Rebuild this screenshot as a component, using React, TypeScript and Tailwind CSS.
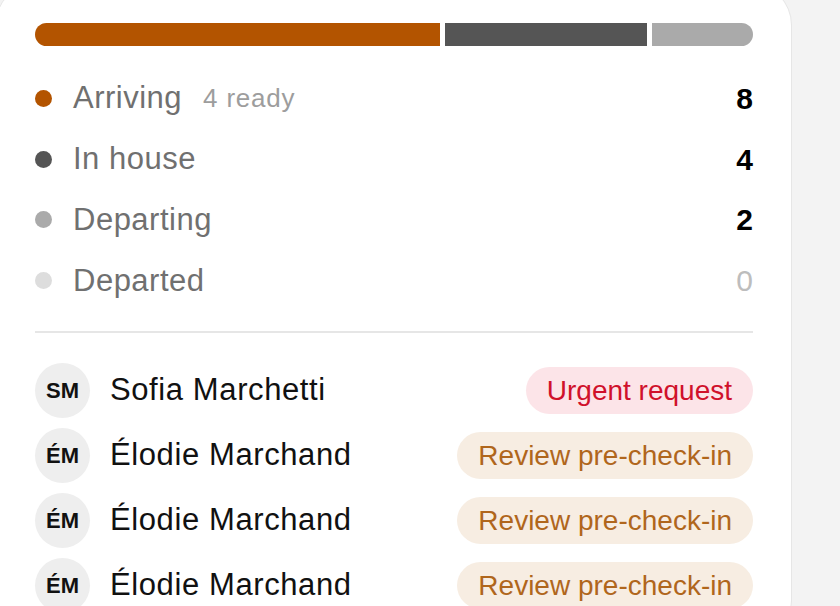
const stats = [
  { label: 'Arriving', note: '4 ready', count: 8, dot: 'bg-[#b35400]', num: 'font-bold text-black' },
  { label: 'In house', note: '', count: 4, dot: 'bg-[#555555]', num: 'font-bold text-black' },
  { label: 'Departing', note: '', count: 2, dot: 'bg-[#aaaaaa]', num: 'font-bold text-black' },
  { label: 'Departed', note: '', count: 0, dot: 'bg-[#dddddd]', num: 'text-[#bdbdbd]' },
];

const guests = [
  { initials: 'SM', name: 'Sofia Marchetti', action: 'Urgent request', urgent: true },
  { initials: 'ÉM', name: 'Élodie Marchand', action: 'Review pre-check-in', urgent: false },
  { initials: 'ÉM', name: 'Élodie Marchand', action: 'Review pre-check-in', urgent: false },
  { initials: 'ÉM', name: 'Élodie Marchand', action: 'Review pre-check-in', urgent: false },
];

export default function App() {
  return (
    <div
      className="w-[840px] h-[606px] overflow-hidden bg-[#f3f3f3]"
      style={{ fontFamily: '"Liberation Sans", Arial, sans-serif' }}
    >
      <div className="ml-[-5px] mt-[-17px] w-[797px] h-[660px] bg-white border border-[#e6e6e6] rounded-[42px] pt-[39px] pl-[39px] pr-[38px]">
        {/* occupancy bar */}
        <div className="flex gap-[5px] h-[23px] rounded-full overflow-hidden">
          <div className="grow-[8] basis-0 bg-[#b35400]" />
          <div className="grow-[4] basis-0 bg-[#555555]" />
          <div className="grow-[2] basis-0 bg-[#aaaaaa]" />
        </div>

        <div className="mt-[22px]">
          {stats.map((s) => (
            <div key={s.label} className="flex items-center h-[60.8px]">
              <span className={`w-[17px] h-[17px] rounded-full ${s.dot}`} />
              <span className="ml-[21px] text-[31px] text-[#707070] tracking-[0.5px]">{s.label}</span>
              {s.note && (
                <span className="ml-[21px] text-[26px] text-[#9d9d9d] tracking-[0.8px]">{s.note}</span>
              )}
              <span className={`ml-auto text-[30px] ${s.num}`}>{s.count}</span>
            </div>
          ))}
        </div>

        <div className="mt-[20px] h-[2px] bg-[#e6e6e6]" />

        <div className="mt-[30px] flex flex-col gap-[10px]">
          {guests.map((g, i) => (
            <div key={i} className="flex items-center h-[55px]">
              <div className="w-[55px] h-[55px] rounded-full bg-[#eeeeee] flex items-center justify-center text-[22px] font-bold text-[#111]">
                {g.initials}
              </div>
              <span className="ml-[20px] text-[31px] text-[#111] tracking-[0.6px]">{g.name}</span>
              <span
                className={`ml-auto h-[47px] px-[21px] rounded-full flex items-center text-[28px] ${
                  g.urgent ? 'bg-[#fce4e8] text-[#d0112b]' : 'bg-[#f7ede2] text-[#b0661c]'
                }`}
              >
                {g.action}
              </span>
            </div>
          ))}
        </div>
      </div>
    </div>
  );
}
